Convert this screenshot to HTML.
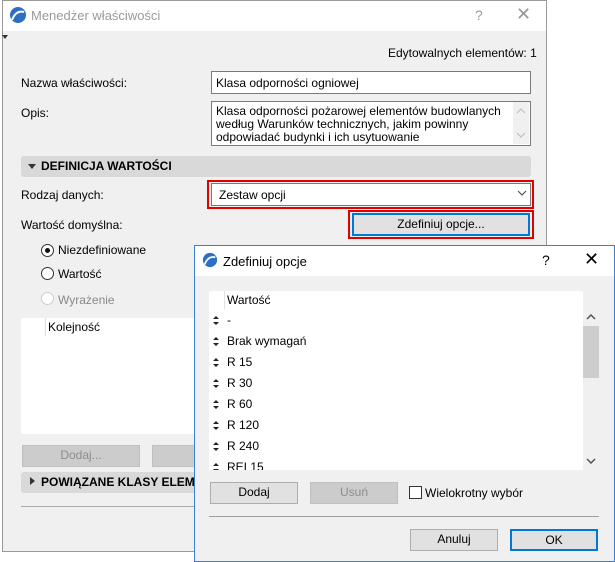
<!DOCTYPE html>
<html><head><meta charset="utf-8"><style>
*{box-sizing:border-box;margin:0;padding:0}
body{width:615px;height:562px;background:#fff;font-family:"Liberation Sans","DejaVu Sans",sans-serif;font-size:12px;color:#000;position:relative;overflow:hidden}
.a{position:absolute;white-space:nowrap}
.in{position:absolute;background:#fff;border:1px solid #7a7a7a}
.btn{position:absolute;background:#e1e1e1;border:1px solid #adadad;text-align:center;line-height:19px}
.dis{background:#cccccc;border-color:#bfbfbf;color:#8d8d8d}
.sec{position:absolute;background:#d9d9d9;border-radius:3px;font-weight:bold;padding-left:20px;line-height:21px;white-space:nowrap;overflow:hidden;height:21px}
.radio{position:absolute;width:13px;height:13px;border:1px solid #333;border-radius:50%;background:#fff}
.ud{position:absolute;left:4px;width:7px;height:9px}
</style></head><body>
<!-- main dialog -->
<div class="a" style="left:2px;top:0;width:545px;height:552px;background:#f0f0f0;border:1px solid #9a9a9a"></div>
<div class="a" style="left:3px;top:1px;width:543px;height:30px;background:#fff"></div>
<svg class="a" style="left:9px;top:6px" width="18" height="18" viewBox="0 0 18 18"><circle cx="9" cy="9" r="8" fill="#2d6fc4"/><path d="M3 14 Q7 4 15 6" stroke="#fff" stroke-width="2" fill="none"/></svg>
<div class="a" style="left:31px;top:8px;font-size:13px;color:#9a9a9a">Menedżer właściwości</div>
<div class="a" style="left:475px;top:7px;font-size:14px;color:#999">?</div>
<div class="a" style="left:516px;top:4px;font-size:18px;color:#999">✕</div>
<div class="a" style="left:2px;top:35px;width:0;height:0;border-left:3px solid transparent;border-right:3px solid transparent;border-top:4px solid #333"></div>
<div class="a" style="left:388px;top:46px">Edytowalnych elementów: 1</div>
<div class="a" style="left:21px;top:76px">Nazwa właściwości:</div>
<div class="in" style="left:211px;top:71px;width:320px;height:23px"></div>
<div class="a" style="left:216px;top:76px">Klasa odporności ogniowej</div>
<div class="a" style="left:21px;top:106px">Opis:</div>
<div class="in" style="left:211px;top:101px;width:320px;height:45px"></div>
<div class="a" style="left:216px;top:105px;line-height:13px">Klasa odporności pożarowej elementów budowlanych<br>według Warunków technicznych, jakim powinny<br>odpowiadać budynki i ich usytuowanie</div>
<div class="a" style="left:513px;top:102px;width:16px;height:42px;background:#f0f0f0"></div>
<svg class="a" style="left:516px;top:108px" width="10" height="30"><path d="M1 5 L5 1 L9 5 M1 25 L5 29 L9 25" stroke="#bbb" fill="none"/></svg>
<div class="sec" style="left:21px;top:156px;width:510px">DEFINICJA WARTOŚCI</div>
<div class="a" style="left:28px;top:164px;border-left:4px solid transparent;border-right:4px solid transparent;border-top:5px solid #333"></div>
<div class="a" style="left:21px;top:188px">Rodzaj danych:</div>
<div class="a" style="left:207px;top:180px;width:327px;height:29px;border:2px solid #e00000"></div>
<div class="in" style="left:211px;top:183px;width:320px;height:23px"></div>
<div class="a" style="left:219px;top:188px">Zestaw opcji</div>
<svg class="a" style="left:517px;top:190px" width="10" height="7"><path d="M1 1 L5 5 L9 1" stroke="#444" fill="none"/></svg>
<div class="a" style="left:21px;top:218px">Wartość domyślna:</div>
<div class="a" style="left:348px;top:210px;width:186px;height:29px;border:2px solid #e00000"></div>
<div class="btn" style="left:352px;top:213px;width:178px;height:23px;border:2px solid #0078d7;line-height:19px">Zdefiniuj opcje...</div>
<div class="radio" style="left:41px;top:244px"></div><div class="a" style="left:45px;top:248px;width:5px;height:5px;border-radius:50%;background:#111"></div>
<div class="a" style="left:58px;top:243px">Niezdefiniowane</div>
<div class="radio" style="left:41px;top:267px"></div>
<div class="a" style="left:58px;top:267px">Wartość</div>
<div class="radio" style="left:41px;top:292px;border-color:#ccc"></div>
<div class="a" style="left:58px;top:293px;color:#888">Wyrażenie</div>
<div class="a" style="left:21px;top:318px;width:180px;height:116px;background:#fff"></div>
<div class="a" style="left:45px;top:318px;width:1px;height:18px;background:#ddd"></div>
<div class="a" style="left:48px;top:320px">Kolejność</div>
<div class="btn dis" style="left:22px;top:445px;width:118px;height:22px">Dodaj...</div>
<div class="btn dis" style="left:152px;top:445px;width:60px;height:22px"></div>
<div class="sec" style="left:21px;top:472px;width:200px">POWIĄZANE KLASY ELEMENTÓW</div>
<div class="a" style="left:30px;top:477px;border-top:4px solid transparent;border-bottom:4px solid transparent;border-left:5px solid #333"></div>
<div class="a" style="left:21px;top:506px;width:180px;height:1px;background:#aaa"></div>
<!-- second dialog -->
<div class="a" style="left:194px;top:245px;width:421px;height:317px;background:#f0f0f0;border:1px solid #3a7fd0"></div>
<div class="a" style="left:195px;top:246px;width:419px;height:30px;background:#fff"></div>
<svg class="a" style="left:202px;top:252px" width="16" height="16" viewBox="0 0 18 18"><circle cx="9" cy="9" r="8" fill="#2d6fc4"/><path d="M3 14 Q7 4 15 6" stroke="#fff" stroke-width="2" fill="none"/></svg>
<div class="a" style="left:223px;top:254px;font-size:13px">Zdefiniuj opcje</div>
<div class="a" style="left:542px;top:252px;font-size:14px">?</div>
<div class="a" style="left:584px;top:249px;font-size:18px">✕</div>
<div class="a" style="left:209px;top:291px;width:374px;height:179px;background:#fff"></div>
<div class="a" style="left:224px;top:291px;width:1px;height:18px;background:#e0e0e0"></div>
<div class="a" style="left:227px;top:293px">Wartość</div>
<div class="a" style="left:583px;top:309px;width:16px;height:161px;background:#f0f0f0"></div>
<div class="a" style="left:583px;top:326px;width:16px;height:52px;background:#cdcdcd"></div>
<svg class="a" style="left:586px;top:314px" width="10" height="150"><path d="M1 5 L5 1 L9 5 M1 145 L5 149 L9 145" stroke="#555" stroke-width="1.5" fill="none"/></svg>
<div class="a" style="left:209px;top:310px;width:374px;height:160px;overflow:hidden">
<svg style="position:absolute;left:4px;top:6px" width="8" height="170"><g fill="#222"><path id="u" d="M0 3 L3 0 L6 3Z M0 6 L3 9 L6 6Z"/><use href="#u" y="21"/><use href="#u" y="42"/><use href="#u" y="63"/><use href="#u" y="84"/><use href="#u" y="105"/><use href="#u" y="126"/><use href="#u" y="147"/></g></svg>
<div style="position:absolute;left:18px;top:0px;line-height:21px">-<br>Brak wymagań<br>R 15<br>R 30<br>R 60<br>R 120<br>R 240<br>REI 15</div>
</div>
<div class="btn" style="left:210px;top:482px;width:88px;height:22px">Dodaj</div>
<div class="btn dis" style="left:310px;top:482px;width:88px;height:22px">Usuń</div>
<div class="a" style="left:409px;top:486px;width:13px;height:13px;border:1px solid #333;background:#fff"></div>
<div class="a" style="left:425px;top:486px">Wielokrotny wybór</div>
<div class="a" style="left:209px;top:516px;width:390px;height:1px;background:#a0a0a0"></div>
<div class="btn" style="left:410px;top:529px;width:88px;height:22px">Anuluj</div>
<div class="btn" style="left:510px;top:529px;width:88px;height:22px;border:2px solid #0078d7;line-height:18px">OK</div>
</body></html>
